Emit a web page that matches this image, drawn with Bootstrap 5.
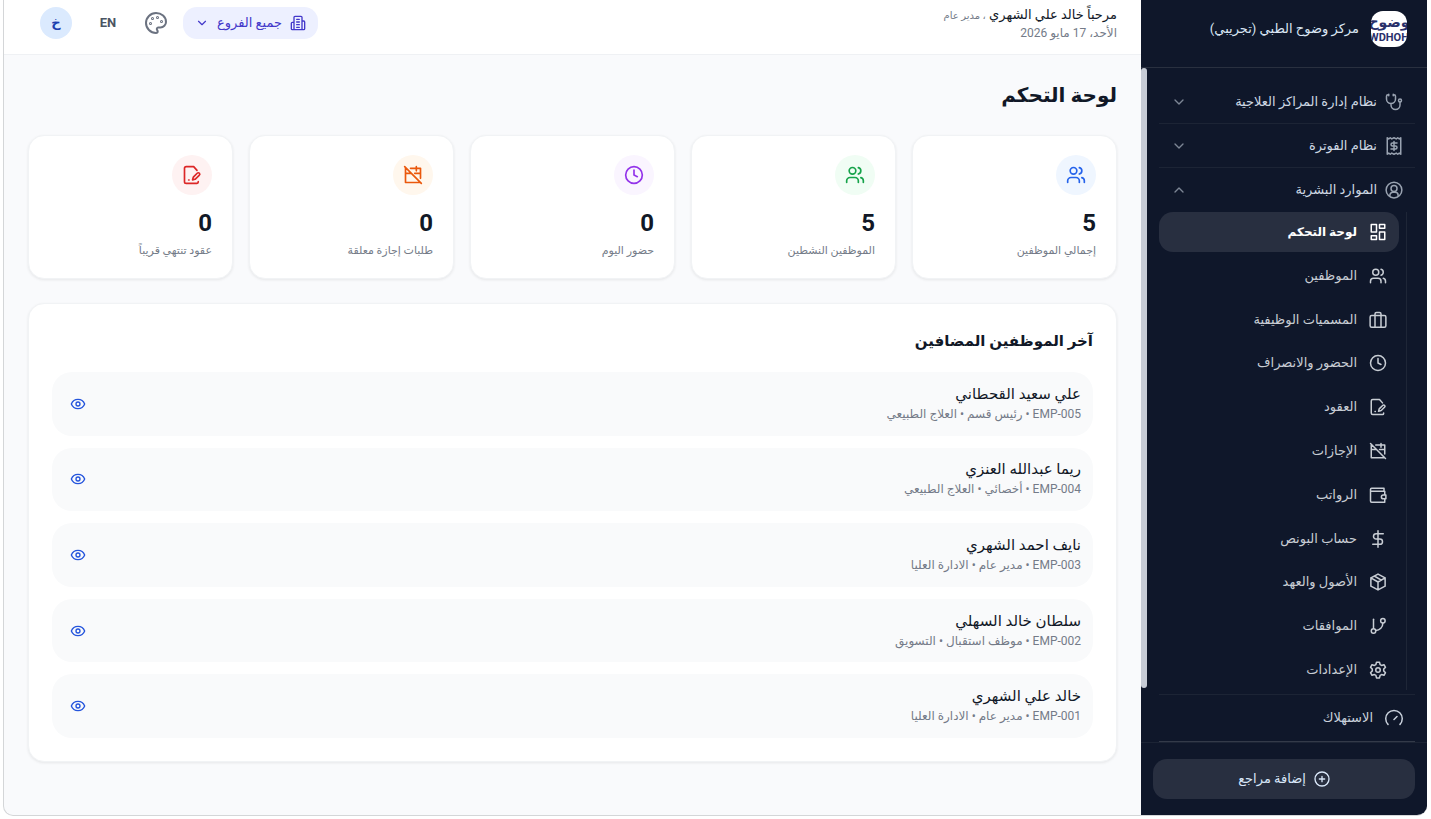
<!DOCTYPE html>
<html lang="ar" dir="rtl">
<head>
<meta charset="utf-8">
<meta name="viewport" content="width=device-width, initial-scale=1">
<title>لوحة التحكم</title>
<link href="https://cdn.jsdelivr.net/npm/bootstrap@5.3.0/dist/css/bootstrap.min.css" rel="stylesheet">
<style>
  :root { --ink: #111827; --navy: #0f172a; --muted: #747b88; --canvas: #f9fafb; --line: #eff1f4; }
  body { font-family: Roboto, "DejaVu Sans", sans-serif; font-size: 14px; line-height: 20px; color: var(--ink); background: #fff; padding: 0 4px 3px 3px; }
  svg { fill: none; stroke: currentColor; stroke-width: 2; stroke-linecap: round; stroke-linejoin: round; flex: none; }
  a { color: inherit; text-decoration: none; }
  .frame { min-height: calc(100vh - 3px); border: 1px solid #d4d6d8; border-top: 0; border-right: 0; border-radius: 0 0 10px 10px; overflow: hidden; background: #f9fafc; }

  .sidebar { width: 286px; flex: none; background: var(--navy); color: #c9d1dc; }
  .brand { height: 68px; padding: 0 20px 9px; gap: 12px; border-bottom: 1px solid #29303f; font-size: 13px; color: #dbe7f5; }
  .logo { width: 36px; height: 36px; border-radius: 12px; background: #fff; color: #29306b; overflow: hidden; font-weight: 700; }
  .logo span { white-space: nowrap; }
  .logo .logo-ar { font-size: 14px; line-height: 18px; }
  .logo .logo-en { font-size: 11px; line-height: 14px; }
  .menu { padding: 12px 12px 0 18px; }
  .thumb { top: 0; left: 0; width: 6px; height: 92%; background: #c7ccd6; border-radius: 3px; }
  .group { height: 44px; padding: 0 12px; gap: 8px; border: 0; background: none; color: #ced7e3; font-size: 13px; font-weight: 500; }
  .group svg { color: #9aa3b1; }
  .group .chev { margin-inline-start: auto; color: #7d8695; }
  .ruled { border-bottom: 1px solid #1c2435; }
  .submenu { margin-inline-start: 8px; padding-inline-start: 7px; border-inline-start: 1px solid #1e2637; justify-content: space-between; }
  .submenu a { height: 40px; padding: 0 12px; gap: 12px; border-radius: 14px; font-size: 13px; color: #c8cdd4; }
  .submenu a.active { background: #282f40; color: #fff; font-size: 12px; font-weight: 700; }
  .usage { height: 48px; margin-top: 4px; padding: 0 12px; gap: 12px; border-top: 1px solid #1c2435; border-bottom: 1px solid #333a49; font-size: 13px; }
  .foot { padding: 16px 12px; border-top: 1px solid #1c2435; }
  .add { height: 40px; border: 0; border-radius: 14px; background: #282f40; color: #d9e7f9; gap: 8px; font-size: 13px; }

  .topbar { height: 55px; padding: 0 24px 8px 36px; background: #fff; border-bottom: 1px solid var(--line); }
  .hello { font-size: 13px; line-height: 18px; }
  .hello b { font-weight: 500; }
  .hello small { font-size: 10px; color: var(--muted); }
  .date { font-size: 12px; line-height: 16px; color: var(--muted); }
  .tools { gap: 15px; }
  .branch { height: 32px; padding: 0 12px; gap: 8px; border: 0; border-radius: 14px; background: #edf0ff; color: #4338ca; font-size: 13px; }
  .icon-btn { border: 0; background: none; padding: 0; color: #6b7280; }
  .lang { border: 0; background: none; width: 42px; padding: 0; font-size: 13px; font-weight: 700; color: #4b5563; }
  .avatar { width: 32px; height: 32px; border: 0; padding: 0; border-radius: 50%; background: #dbeafe; color: #1e40af; font-size: 13px; font-weight: 700; }

  .page { padding: 24px 24px 53px; }
  .page h1 { font-size: 20px; line-height: 32px; font-weight: 700; margin: 0 0 24px; }
  .stats { display: grid; grid-template-columns: repeat(5, minmax(0, 1fr)); gap: 16px; margin-bottom: 24px; }
  .panel { background: #fff; border: 1px solid #f1f3f5; border-radius: 16px; box-shadow: 0 1px 3px rgba(0,0,0,.08); }
  .stat { padding: 19px 20px; height: 144px; }
  .disc { width: 40px; height: 40px; border-radius: 50%; margin-bottom: 12px; }
  .num { font-size: 24px; line-height: 32px; font-weight: 700; }
  .cap { font-size: 11px; line-height: 16px; margin-top: 4px; color: var(--muted); }
  .latest { padding: 23px; }
  .latest h2 { font-size: 15px; line-height: 28px; font-weight: 700; margin: 0 0 17px; }
  .people { gap: 12px; margin: 0; padding: 0; list-style: none; }
  .person { min-height: 60px; border-radius: 20px; background: var(--canvas); padding: 0 12px; }
  .who { font-size: 15px; line-height: 20px; font-weight: 500; }
  .meta { font-size: 12px; line-height: 20px; color: var(--muted); }
  .view { width: 28px; height: 28px; color: #2454dc; }
</style>
</head>
<body>
<svg width="0" height="0" class="position-absolute" aria-hidden="true">
  <defs>
    <symbol id="people" viewBox="0 0 24 24"><path d="M16 21v-2a4 4 0 0 0-4-4H6a4 4 0 0 0-4 4v2"/><circle cx="9" cy="7" r="4"/><path d="M22 21v-2a4 4 0 0 0-3-3.87M16 3.13a4 4 0 0 1 0 7.75"/></symbol>
    <symbol id="clock" viewBox="0 0 24 24"><circle cx="12" cy="12" r="10"/><path d="M12 6v6l4 2"/></symbol>
    <symbol id="caloff" viewBox="0 0 24 24"><path d="M2 2l20 20M3 4v17h18M9 4h12v12M16 2v5M14 10h7M3 10h6"/></symbol>
    <symbol id="contract" viewBox="0 0 24 24"><path d="M18 6.500 14 2H5a2 2 0 0 0-2 2v16a2 2 0 0 0 2 2h13a1.500 1.500 0 0 0 1.500-1.500V20"/><path d="M20.900 9.900a1.900 1.900 0 0 0-2.700 0l-4.300 4.300a2 2 0 0 0-.5.9l-.7 2.700 2.700-.7a2 2 0 0 0 .9-.5l4.300-4.200a1.800 1.800 0 0 0 .3-2.500z"/><path d="M8 18h.5"/></symbol>
    <symbol id="chev" viewBox="0 0 24 24"><path d="m6 9 6 6 6-6"/></symbol>
    <symbol id="eye" viewBox="0 0 24 24"><path d="M2 12c1.700-4.400 5.500-7 10-7s8.300 2.600 10 7c-1.700 4.400-5.500 7-10 7s-8.300-2.600-10-7z"/><circle cx="12" cy="12" r="3"/></symbol>
  </defs>
</svg>
<div class="frame d-flex align-items-stretch">

  <aside class="sidebar d-flex flex-column">
    <div class="brand d-flex align-items-center">
      <div class="logo d-flex flex-column align-items-center justify-content-center"><span class="logo-ar">وضوح</span><span class="logo-en" dir="ltr">WDHOH</span></div>
      <span>مركز وضوح الطبي (تجريبي)</span>
    </div>
    <div class="position-relative d-flex flex-column flex-grow-1">
      <div class="thumb position-absolute"></div>
      <nav class="menu d-flex flex-column flex-grow-1">
        <button class="group ruled d-flex align-items-center" type="button">
          <svg width="18" height="18" viewBox="0 0 24 24"><path d="M5 2.300H4a2 2 0 0 0-2 2V8a6 6 0 0 0 12 0V4.300a2 2 0 0 0-2-2h-1M5 1.500v2M11 1.500v2M8 14v2a6 6 0 0 0 12 0v-4"/><circle cx="20" cy="10" r="2"/></svg>
          <span>نظام إدارة المراكز العلاجية</span>
          <svg class="chev" width="16" height="16"><use href="#chev"/></svg>
        </button>
        <button class="group ruled d-flex align-items-center" type="button">
          <svg width="18" height="18" viewBox="0 0 24 24"><path d="M3 1v22l2-1.500L7 23l2-1.500 3 1.500 3-1.500 2 1.500 2-1.500 2 1.500V1l-2 1.500L17 1l-2 1.500L12 1 9 2.500 7 1 5 2.500z"/><path d="M16 8h-6a2 2 0 0 0 0 4h4a2 2 0 0 1 0 4H8M12 6v12"/></svg>
          <span>نظام الفوترة</span>
          <svg class="chev" width="16" height="16"><use href="#chev"/></svg>
        </button>
        <button class="group d-flex align-items-center" type="button">
          <svg width="18" height="18" viewBox="0 0 24 24"><circle cx="12" cy="12" r="10.500"/><circle cx="12" cy="10" r="4"/><path d="M6.500 20v-1a4 4 0 0 1 4-4h3a4 4 0 0 1 4 4v1"/></svg>
          <span>الموارد البشرية</span>
          <svg class="chev" width="16" height="16" viewBox="0 0 24 24"><path d="m6 15 6-6 6 6"/></svg>
        </button>
        <div class="submenu d-flex flex-column flex-grow-1">
          <a class="active d-flex align-items-center" href="#"><svg width="18" height="18" viewBox="0 0 24 24"><path d="M14 2h7v5h-7zM3 2h7v10H3zM14 12h7v10h-7zM3 17h7v5H3z"/></svg>لوحة التحكم</a>
          <a class="d-flex align-items-center" href="#"><svg width="18" height="18"><use href="#people"/></svg>الموظفين</a>
          <a class="d-flex align-items-center" href="#"><svg width="18" height="18" viewBox="0 0 24 24"><rect x="1.500" y="6" width="21" height="15.500" rx="2"/><path d="M16 21V4a2 2 0 0 0-2-2h-4a2 2 0 0 0-2 2v17"/></svg>المسميات الوظيفية</a>
          <a class="d-flex align-items-center" href="#"><svg width="18" height="18"><use href="#clock"/></svg>الحضور والانصراف</a>
          <a class="d-flex align-items-center" href="#"><svg width="18" height="18"><use href="#contract"/></svg>العقود</a>
          <a class="d-flex align-items-center" href="#"><svg width="18" height="18"><use href="#caloff"/></svg>الإجازات</a>
          <a class="d-flex align-items-center" href="#"><svg width="18" height="18" viewBox="0 0 24 24"><path d="M20 7V3H3.500a1.500 1.500 0 0 0-1.500 1.500V20a1.500 1.500 0 0 0 1.500 1.500H21V17M2 7h19v5M22.500 12H19a2.500 2.500 0 0 0 0 5h3.500z"/></svg>الرواتب</a>
          <a class="d-flex align-items-center" href="#"><svg width="18" height="18" viewBox="0 0 24 24"><path d="M12 1v22M19 5H9.500a3.500 3.500 0 0 0 0 7h5a3.500 3.500 0 0 1 0 7H5"/></svg>حساب البونص</a>
          <a class="d-flex align-items-center" href="#"><svg width="18" height="18" viewBox="0 0 24 24"><path d="m12 1.500 9.500 5v11L12 22.500l-9.500-5v-11zM2.500 6.500 12 12l9.500-5.500M12 12v10.500M7 4l9.500 5.500"/></svg>الأصول والعهد</a>
          <a class="d-flex align-items-center" href="#"><svg width="18" height="18" viewBox="0 0 24 24"><path d="M6 3v12"/><circle cx="18.500" cy="5" r="3"/><circle cx="6" cy="18.500" r="3"/><path d="M18.500 8a10 10 0 0 1-9.500 10"/></svg>الموافقات</a>
          <a class="d-flex align-items-center" href="#"><svg width="18" height="18" viewBox="0 0 24 24"><path d="M10 1.500h4l.8 3.200 2 1.200 3.200-1 2 3.500-2.400 2.400v2.400l2.400 2.400-2 3.500-3.200-1-2 1.200-.8 3.200h-4l-.8-3.200-2-1.200-3.200 1-2-3.500 2.400-2.400v-2.400L2 8.400l2-3.500 3.200 1 2-1.200z"/><circle cx="12" cy="12" r="3"/></svg>الإعدادات</a>
        </div>
        <a class="usage d-flex align-items-center" href="#"><svg width="18" height="18" viewBox="0 0 24 24"><path d="m12 14 4-4M4 20.500a11 11 0 1 1 16 0"/></svg>الاستهلاك</a>
      </nav>
    </div>
    <div class="foot">
      <button class="add w-100 d-flex align-items-center justify-content-center" type="button"><svg width="16" height="16" viewBox="0 0 24 24"><circle cx="12" cy="12" r="10.500"/><path d="M8 12h8M12 8v8"/></svg>إضافة مراجع</button>
    </div>
  </aside>

  <div class="d-flex flex-column flex-grow-1">
    <header class="topbar d-flex align-items-center justify-content-between">
      <div>
        <div class="hello"><b>مرحباً خالد علي الشهري</b> <small>، مدير عام</small></div>
        <div class="date">الأحد، 17 مايو 2026</div>
      </div>
      <div class="tools d-flex align-items-center">
        <button class="branch d-flex align-items-center" type="button">
          <svg width="16" height="16" viewBox="0 0 24 24"><path d="M6 22V3.500A1.500 1.500 0 0 1 7.500 2h9A1.500 1.500 0 0 1 18 3.500V22zM6 11H3.500A1.500 1.500 0 0 0 2 12.500v8A1.500 1.500 0 0 0 3.500 22h17a1.500 1.500 0 0 0 1.500-1.500v-10A1.500 1.500 0 0 0 20.500 9H18M10 6.500h4M10 10.500h4M10 14.500h4M10 18.500h4"/></svg>
          جميع الفروع
          <svg width="14" height="14"><use href="#chev"/></svg>
        </button>
        <button class="icon-btn d-flex" type="button" aria-label="المظهر">
          <svg width="24" height="24" viewBox="0 0 24 24"><path d="M12 2C6.500 2 2 6.500 2 12s4.500 10 10 10c.9 0 1.700-.7 1.700-1.700 0-.4-.2-.8-.4-1.100-.3-.3-.5-.7-.5-1.100a1.600 1.600 0 0 1 1.700-1.700h2c3 0 5.500-2.500 5.500-5.500C22 6 17.500 2 12 2z"/><circle cx="13.500" cy="6.500" r=".5"/><circle cx="17.500" cy="10.500" r=".5"/><circle cx="8.500" cy="7.500" r=".5"/><circle cx="6.500" cy="12.500" r=".5"/></svg>
        </button>
        <button class="lang" type="button">EN</button>
        <button class="avatar" type="button">خ</button>
      </div>
    </header>

    <main class="page d-flex flex-column flex-grow-1">
      <h1>لوحة التحكم</h1>
      <section class="stats">
        <div class="panel stat"><div class="disc d-flex align-items-center justify-content-center" style="background:#eff6ff;color:#2563eb"><svg width="20" height="20"><use href="#people"/></svg></div><div class="num">5</div><div class="cap">إجمالي الموظفين</div></div>
        <div class="panel stat"><div class="disc d-flex align-items-center justify-content-center" style="background:#f0fdf4;color:#16a34a"><svg width="20" height="20"><use href="#people"/></svg></div><div class="num">5</div><div class="cap">الموظفين النشطين</div></div>
        <div class="panel stat"><div class="disc d-flex align-items-center justify-content-center" style="background:#faf5ff;color:#9333ea"><svg width="20" height="20"><use href="#clock"/></svg></div><div class="num">0</div><div class="cap">حضور اليوم</div></div>
        <div class="panel stat"><div class="disc d-flex align-items-center justify-content-center" style="background:#fff7ed;color:#ea580c"><svg width="20" height="20"><use href="#caloff"/></svg></div><div class="num">0</div><div class="cap">طلبات إجازة معلقة</div></div>
        <div class="panel stat"><div class="disc d-flex align-items-center justify-content-center" style="background:#fef2f2;color:#dc2626"><svg width="20" height="20"><use href="#contract"/></svg></div><div class="num">0</div><div class="cap">عقود تنتهي قريباً</div></div>
      </section>
      <section class="panel latest d-flex flex-column flex-grow-1">
        <h2>آخر الموظفين المضافين</h2>
        <ul class="people d-flex flex-column flex-grow-1">
          <li class="person d-flex align-items-center justify-content-between flex-fill"><div><div class="who">علي سعيد القحطاني</div><div class="meta">EMP-005 • رئيس قسم • العلاج الطبيعي</div></div><a class="view d-flex align-items-center justify-content-center" href="#" aria-label="عرض"><svg width="16" height="16"><use href="#eye"/></svg></a></li>
          <li class="person d-flex align-items-center justify-content-between flex-fill"><div><div class="who">ريما عبدالله العنزي</div><div class="meta">EMP-004 • أخصائي • العلاج الطبيعي</div></div><a class="view d-flex align-items-center justify-content-center" href="#" aria-label="عرض"><svg width="16" height="16"><use href="#eye"/></svg></a></li>
          <li class="person d-flex align-items-center justify-content-between flex-fill"><div><div class="who">نايف احمد الشهري</div><div class="meta">EMP-003 • مدير عام • الادارة العليا</div></div><a class="view d-flex align-items-center justify-content-center" href="#" aria-label="عرض"><svg width="16" height="16"><use href="#eye"/></svg></a></li>
          <li class="person d-flex align-items-center justify-content-between flex-fill"><div><div class="who">سلطان خالد السهلي</div><div class="meta">EMP-002 • موظف استقبال • التسويق</div></div><a class="view d-flex align-items-center justify-content-center" href="#" aria-label="عرض"><svg width="16" height="16"><use href="#eye"/></svg></a></li>
          <li class="person d-flex align-items-center justify-content-between flex-fill"><div><div class="who">خالد علي الشهري</div><div class="meta">EMP-001 • مدير عام • الادارة العليا</div></div><a class="view d-flex align-items-center justify-content-center" href="#" aria-label="عرض"><svg width="16" height="16"><use href="#eye"/></svg></a></li>
        </ul>
      </section>
    </main>
  </div>
</div>
<script src="https://cdn.jsdelivr.net/npm/bootstrap@5.3.0/dist/js/bootstrap.bundle.min.js"></script>
</body>
</html>
